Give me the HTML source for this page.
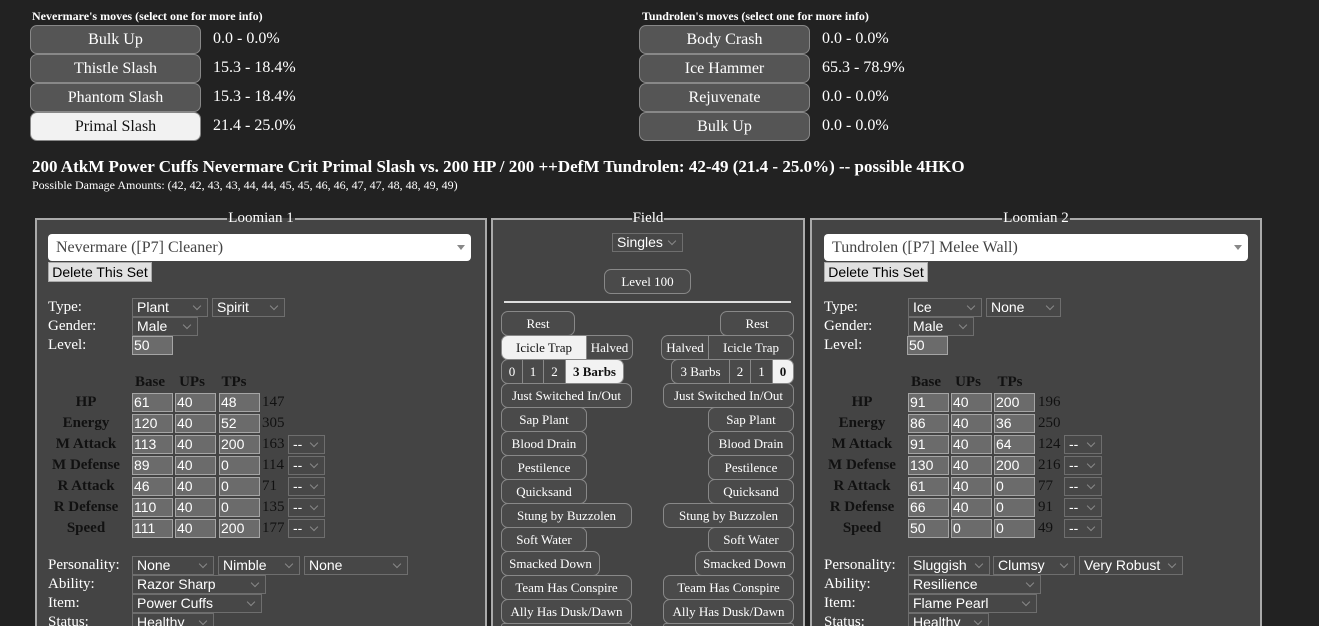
<!DOCTYPE html>
<html style="width:1319px;height:626px;overflow:hidden"><head><meta charset="utf-8"><style>
*{box-sizing:border-box;margin:0;padding:0}
body{width:1319px;height:626px;overflow:hidden;background:#222;color:#fff;font-family:"Liberation Serif",serif;position:relative}
.a{position:absolute;white-space:nowrap}
.t{font-size:12px;font-weight:bold}
.mb{position:absolute;width:171px;height:29px;border:1px solid #888;border-radius:7px;background:#555;color:#fff;font-size:16px;text-align:center;line-height:27px}
.mb.on{background:#f2f2f2;color:#111}
.pc{position:absolute;font-size:16px;line-height:28px}
.fs{position:absolute;top:218px;height:408px;border:2px solid #aaa;border-bottom:none;background:#444}
.lg{position:absolute;top:-11px;left:0;right:0;text-align:center;font-size:15px;line-height:18px}
.lg span{padding:0 1px;background:linear-gradient(#222 50%,#444 50%)}
.sel{position:absolute;height:19px;background:#474747;border:1px solid #6e6e6e;color:#fff;font:14px "Liberation Sans",sans-serif;line-height:17px;padding-left:4px}
.sel:after{content:"";position:absolute;right:7px;top:4px;width:5px;height:5px;border-right:1px solid #888;border-bottom:1px solid #888;transform:rotate(45deg)}
.in{position:absolute;height:19px;width:41px;background:#6b6b6b;border:1px solid #a5a5a5;color:#fff;font:14px "Liberation Sans",sans-serif;line-height:17px;padding-left:1px}
.lb{position:absolute;font-size:15px;line-height:19px}
.sl{position:absolute;width:80px;text-align:center;font-weight:bold;color:#111;font-size:15px;line-height:19px}
.tot{position:absolute;color:#111;font-size:15px;line-height:19px}
.big{position:absolute;height:27px;background:#fff;border-radius:4px;color:#444;font-size:16px;line-height:27px;padding-left:8px}
.big:after{content:"";position:absolute;right:6px;top:11px;border:4px solid transparent;border-top:5px solid #888}
.del{position:absolute;height:20px;width:104px;background:#e1e1e1;border:1px solid #aaa;color:#000;font:14px "Liberation Sans",sans-serif;line-height:18px;text-align:center}
.fb{position:absolute;height:25px;border:1px solid #888;border-radius:7px;background:#4a4a4a;color:#fff;font-size:13px;line-height:23px;text-align:center}
.fb.on{background:#f2f2f2;color:#111}
</style></head><body>

<div class="a t" style="left:32px;top:9px">Nevermare's moves (select one for more info)</div>
<div class="mb" style="left:30px;top:25px">Bulk Up</div><div class="pc" style="left:213px;top:25px">0.0 - 0.0%</div>
<div class="mb" style="left:30px;top:54px">Thistle Slash</div><div class="pc" style="left:213px;top:54px">15.3 - 18.4%</div>
<div class="mb" style="left:30px;top:83px">Phantom Slash</div><div class="pc" style="left:213px;top:83px">15.3 - 18.4%</div>
<div class="mb on" style="left:30px;top:112px">Primal Slash</div><div class="pc" style="left:213px;top:112px">21.4 - 25.0%</div>

<div class="a t" style="left:642px;top:9px">Tundrolen's moves (select one for more info)</div>
<div class="mb" style="left:639px;top:25px">Body Crash</div><div class="pc" style="left:822px;top:25px">0.0 - 0.0%</div>
<div class="mb" style="left:639px;top:54px">Ice Hammer</div><div class="pc" style="left:822px;top:54px">65.3 - 78.9%</div>
<div class="mb" style="left:639px;top:83px">Rejuvenate</div><div class="pc" style="left:822px;top:83px">0.0 - 0.0%</div>
<div class="mb" style="left:639px;top:112px">Bulk Up</div><div class="pc" style="left:822px;top:112px">0.0 - 0.0%</div>

<div class="a" style="left:32px;top:157px;font-size:17px;font-weight:bold">200 AtkM Power Cuffs Nevermare Crit Primal Slash vs. 200 HP / 200 ++DefM Tundrolen: 42-49 (21.4 - 25.0%) -- possible 4HKO</div>
<div class="a" style="left:32px;top:178px;font-size:12px">Possible Damage Amounts: (42, 42, 43, 43, 44, 44, 45, 45, 46, 46, 47, 47, 48, 48, 49, 49)</div>

<!-- Panel 1 -->
<div class="fs" style="left:35px;width:452px"><div class="lg"><span>Loomian 1</span></div></div>
<div class="big" style="left:48px;top:234px;width:423px">Nevermare ([P7] Cleaner)</div>
<div class="del" style="left:48px;top:262px">Delete This Set</div>
<div class="lb" style="left:48px;top:298px">Type:</div><div class="sel" style="left:132px;top:298px;width:76px">Plant</div><div class="sel" style="left:212px;top:298px;width:73px">Spirit</div>
<div class="lb" style="left:48px;top:317px">Gender:</div><div class="sel" style="left:132px;top:317px;width:66px">Male</div>
<div class="lb" style="left:48px;top:336px">Level:</div><div class="in" style="left:132px;top:336px">50</div>
<div class="sl" style="left:124px;top:373px;width:52px">Base</div><div class="sl" style="left:170px;top:373px;width:44px">UPs</div><div class="sl" style="left:212px;top:373px;width:44px">TPs</div>

<div class="sl" style="left:46px;top:393px">HP</div><div class="in" style="left:132px;top:393px">61</div><div class="in" style="left:175px;top:393px">40</div><div class="in" style="left:219px;top:393px">48</div><div class="tot" style="left:262px;top:393px">147</div>
<div class="sl" style="left:46px;top:414px">Energy</div><div class="in" style="left:132px;top:414px">120</div><div class="in" style="left:175px;top:414px">40</div><div class="in" style="left:219px;top:414px">52</div><div class="tot" style="left:262px;top:414px">305</div>
<div class="sl" style="left:46px;top:435px">M Attack</div><div class="in" style="left:132px;top:435px">113</div><div class="in" style="left:175px;top:435px">40</div><div class="in" style="left:219px;top:435px">200</div><div class="tot" style="left:262px;top:435px">163</div><div class="sel" style="left:288px;top:435px;width:37px">--</div>
<div class="sl" style="left:46px;top:456px">M Defense</div><div class="in" style="left:132px;top:456px">89</div><div class="in" style="left:175px;top:456px">40</div><div class="in" style="left:219px;top:456px">0</div><div class="tot" style="left:262px;top:456px">114</div><div class="sel" style="left:288px;top:456px;width:37px">--</div>
<div class="sl" style="left:46px;top:477px">R Attack</div><div class="in" style="left:132px;top:477px">46</div><div class="in" style="left:175px;top:477px">40</div><div class="in" style="left:219px;top:477px">0</div><div class="tot" style="left:262px;top:477px">71</div><div class="sel" style="left:288px;top:477px;width:37px">--</div>
<div class="sl" style="left:46px;top:498px">R Defense</div><div class="in" style="left:132px;top:498px">110</div><div class="in" style="left:175px;top:498px">40</div><div class="in" style="left:219px;top:498px">0</div><div class="tot" style="left:262px;top:498px">135</div><div class="sel" style="left:288px;top:498px;width:37px">--</div>
<div class="sl" style="left:46px;top:519px">Speed</div><div class="in" style="left:132px;top:519px">111</div><div class="in" style="left:175px;top:519px">40</div><div class="in" style="left:219px;top:519px">200</div><div class="tot" style="left:262px;top:519px">177</div><div class="sel" style="left:288px;top:519px;width:37px">--</div>

<div class="lb" style="left:48px;top:556px">Personality:</div><div class="sel" style="left:132px;top:556px;width:82px">None</div><div class="sel" style="left:218px;top:556px;width:82px">Nimble</div><div class="sel" style="left:304px;top:556px;width:104px">None</div>
<div class="lb" style="left:48px;top:575px">Ability:</div><div class="sel" style="left:132px;top:575px;width:134px">Razor Sharp</div>
<div class="lb" style="left:48px;top:594px">Item:</div><div class="sel" style="left:132px;top:594px;width:130px">Power Cuffs</div>
<div class="lb" style="left:48px;top:613px">Status:</div><div class="sel" style="left:132px;top:613px;width:82px">Healthy</div>

<!-- Field -->
<div class="fs" style="left:491px;width:314px"><div class="lg"><span>Field</span></div></div>
<div class="sel" style="left:612px;top:233px;width:71px">Singles</div>
<div class="fb" style="left:604px;top:269px;width:87px">Level 100</div>
<div class="a" style="left:504px;top:301px;width:287px;height:2px;background:#ddd"></div>

<div class="fb" style="left:501px;top:311px;width:74px">Rest</div>
<div class="fb on" style="left:501px;top:335px;width:86px;border-radius:7px 0 0 7px">Icicle Trap</div><div class="fb" style="left:586px;top:335px;width:47px;border-radius:0 7px 7px 0">Halved</div>
<div class="fb" style="left:501px;top:359px;width:22px;border-radius:7px 0 0 7px">0</div><div class="fb" style="left:522px;top:359px;width:22px;border-radius:0">1</div><div class="fb" style="left:543px;top:359px;width:23px;border-radius:0">2</div><div class="fb on" style="left:565px;top:359px;width:59px;border-radius:0 7px 7px 0;font-weight:bold">3 Barbs</div>
<div class="fb" style="left:501px;top:383px;width:131px">Just Switched In/Out</div>
<div class="fb" style="left:501px;top:407px;width:86px">Sap Plant</div>
<div class="fb" style="left:501px;top:431px;width:86px">Blood Drain</div>
<div class="fb" style="left:501px;top:455px;width:86px">Pestilence</div>
<div class="fb" style="left:501px;top:479px;width:86px">Quicksand</div>
<div class="fb" style="left:501px;top:503px;width:131px">Stung by Buzzolen</div>
<div class="fb" style="left:501px;top:527px;width:86px">Soft Water</div>
<div class="fb" style="left:501px;top:551px;width:99px">Smacked Down</div>
<div class="fb" style="left:501px;top:575px;width:131px">Team Has Conspire</div>
<div class="fb" style="left:501px;top:599px;width:131px">Ally Has Dusk/Dawn</div>
<div class="fb" style="left:501px;top:623px;width:131px;height:3px;border-bottom:none;border-radius:7px 7px 0 0"></div>

<div class="fb" style="left:720px;top:311px;width:74px">Rest</div>
<div class="fb" style="left:661px;top:335px;width:48px;border-radius:7px 0 0 7px">Halved</div><div class="fb" style="left:708px;top:335px;width:86px;border-radius:0 7px 7px 0">Icicle Trap</div>
<div class="fb" style="left:671px;top:359px;width:59px;border-radius:7px 0 0 7px">3 Barbs</div><div class="fb" style="left:729px;top:359px;width:22px;border-radius:0">2</div><div class="fb" style="left:750px;top:359px;width:23px;border-radius:0">1</div><div class="fb on" style="left:772px;top:359px;width:22px;border-radius:0 7px 7px 0;font-weight:bold">0</div>
<div class="fb" style="left:663px;top:383px;width:131px">Just Switched In/Out</div>
<div class="fb" style="left:708px;top:407px;width:86px">Sap Plant</div>
<div class="fb" style="left:708px;top:431px;width:86px">Blood Drain</div>
<div class="fb" style="left:708px;top:455px;width:86px">Pestilence</div>
<div class="fb" style="left:708px;top:479px;width:86px">Quicksand</div>
<div class="fb" style="left:663px;top:503px;width:131px">Stung by Buzzolen</div>
<div class="fb" style="left:708px;top:527px;width:86px">Soft Water</div>
<div class="fb" style="left:695px;top:551px;width:99px">Smacked Down</div>
<div class="fb" style="left:663px;top:575px;width:131px">Team Has Conspire</div>
<div class="fb" style="left:663px;top:599px;width:131px">Ally Has Dusk/Dawn</div>
<div class="fb" style="left:663px;top:623px;width:131px;height:3px;border-bottom:none;border-radius:7px 7px 0 0"></div>

<!-- Panel 2 -->
<div class="fs" style="left:810px;width:452px"><div class="lg"><span>Loomian 2</span></div></div>
<div class="big" style="left:824px;top:234px;width:424px">Tundrolen ([P7] Melee Wall)</div>
<div class="del" style="left:824px;top:262px">Delete This Set</div>
<div class="lb" style="left:824px;top:298px">Type:</div><div class="sel" style="left:908px;top:298px;width:74px">Ice</div><div class="sel" style="left:986px;top:298px;width:75px">None</div>
<div class="lb" style="left:824px;top:317px">Gender:</div><div class="sel" style="left:908px;top:317px;width:66px">Male</div>
<div class="lb" style="left:824px;top:336px">Level:</div><div class="in" style="left:907px;top:336px">50</div>
<div class="sl" style="left:900px;top:373px;width:52px">Base</div><div class="sl" style="left:946px;top:373px;width:44px">UPs</div><div class="sl" style="left:988px;top:373px;width:44px">TPs</div>

<div class="sl" style="left:822px;top:393px">HP</div><div class="in" style="left:908px;top:393px">91</div><div class="in" style="left:951px;top:393px">40</div><div class="in" style="left:994px;top:393px">200</div><div class="tot" style="left:1038px;top:393px">196</div>
<div class="sl" style="left:822px;top:414px">Energy</div><div class="in" style="left:908px;top:414px">86</div><div class="in" style="left:951px;top:414px">40</div><div class="in" style="left:994px;top:414px">36</div><div class="tot" style="left:1038px;top:414px">250</div>
<div class="sl" style="left:822px;top:435px">M Attack</div><div class="in" style="left:908px;top:435px">91</div><div class="in" style="left:951px;top:435px">40</div><div class="in" style="left:994px;top:435px">64</div><div class="tot" style="left:1038px;top:435px">124</div><div class="sel" style="left:1064px;top:435px;width:38px">--</div>
<div class="sl" style="left:822px;top:456px">M Defense</div><div class="in" style="left:908px;top:456px">130</div><div class="in" style="left:951px;top:456px">40</div><div class="in" style="left:994px;top:456px">200</div><div class="tot" style="left:1038px;top:456px">216</div><div class="sel" style="left:1064px;top:456px;width:38px">--</div>
<div class="sl" style="left:822px;top:477px">R Attack</div><div class="in" style="left:908px;top:477px">61</div><div class="in" style="left:951px;top:477px">40</div><div class="in" style="left:994px;top:477px">0</div><div class="tot" style="left:1038px;top:477px">77</div><div class="sel" style="left:1064px;top:477px;width:38px">--</div>
<div class="sl" style="left:822px;top:498px">R Defense</div><div class="in" style="left:908px;top:498px">66</div><div class="in" style="left:951px;top:498px">40</div><div class="in" style="left:994px;top:498px">0</div><div class="tot" style="left:1038px;top:498px">91</div><div class="sel" style="left:1064px;top:498px;width:38px">--</div>
<div class="sl" style="left:822px;top:519px">Speed</div><div class="in" style="left:908px;top:519px">50</div><div class="in" style="left:951px;top:519px">0</div><div class="in" style="left:994px;top:519px">0</div><div class="tot" style="left:1038px;top:519px">49</div><div class="sel" style="left:1064px;top:519px;width:38px">--</div>

<div class="lb" style="left:824px;top:556px">Personality:</div><div class="sel" style="left:908px;top:556px;width:82px">Sluggish</div><div class="sel" style="left:993px;top:556px;width:82px">Clumsy</div><div class="sel" style="left:1079px;top:556px;width:104px">Very Robust</div>
<div class="lb" style="left:824px;top:575px">Ability:</div><div class="sel" style="left:908px;top:575px;width:133px">Resilience</div>
<div class="lb" style="left:824px;top:594px">Item:</div><div class="sel" style="left:908px;top:594px;width:129px">Flame Pearl</div>
<div class="lb" style="left:824px;top:613px">Status:</div><div class="sel" style="left:908px;top:613px;width:81px">Healthy</div>
</body></html>
